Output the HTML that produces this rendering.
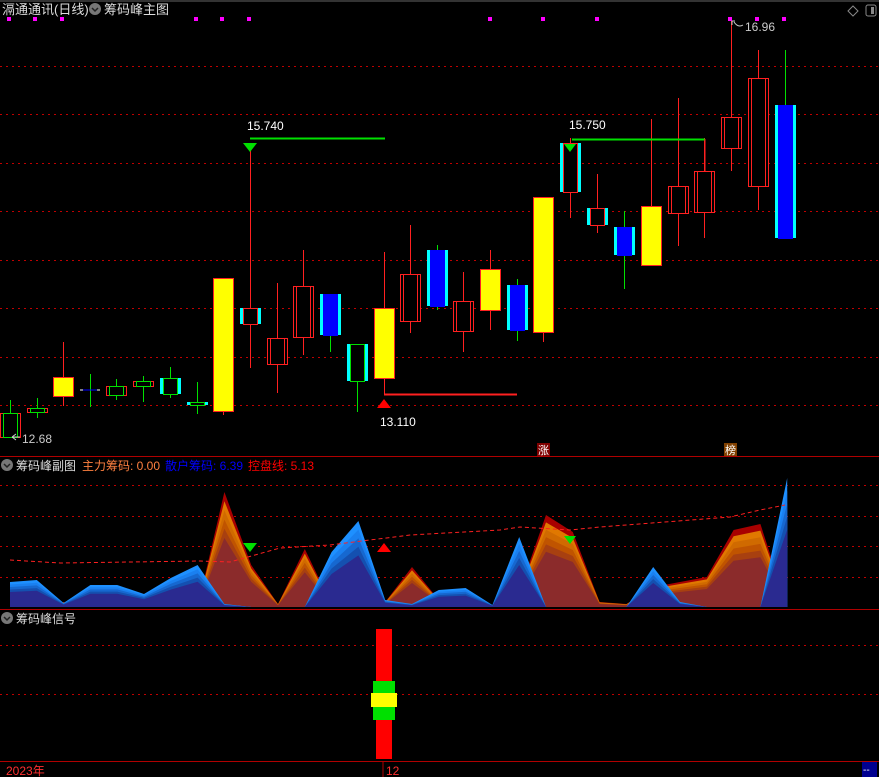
<!DOCTYPE html>
<html><head><meta charset="utf-8"><style>
html,body{margin:0;padding:0;background:#000;width:879px;height:777px;overflow:hidden}
svg{display:block}
text{font-family:"Liberation Sans","Noto Sans CJK SC",sans-serif}
</style></head><body>
<svg id="s" width="879" height="777" xmlns="http://www.w3.org/2000/svg">
<rect width="879" height="777" fill="#000"/>
<line x1="0" y1="1" x2="879" y2="1" stroke="#333" stroke-width="2"/>
<g stroke="#c00000" stroke-dasharray="2,4" stroke-width="1">
<line x1="0" y1="66.5" x2="879" y2="66.5"/><line x1="0" y1="114.5" x2="879" y2="114.5"/>
<line x1="0" y1="163.5" x2="879" y2="163.5"/><line x1="0" y1="211.5" x2="879" y2="211.5"/>
<line x1="0" y1="260.5" x2="879" y2="260.5"/><line x1="0" y1="308.5" x2="879" y2="308.5"/>
<line x1="0" y1="357.5" x2="879" y2="357.5"/><line x1="0" y1="405.5" x2="879" y2="405.5"/>
<line x1="0" y1="485.5" x2="879" y2="485.5"/><line x1="0" y1="516.5" x2="879" y2="516.5"/>
<line x1="0" y1="546.5" x2="879" y2="546.5"/><line x1="0" y1="577.5" x2="879" y2="577.5"/>
<line x1="0" y1="645.5" x2="879" y2="645.5"/><line x1="0" y1="694.5" x2="879" y2="694.5"/>
</g>
<g stroke="#b00000"><line x1="0" y1="456.5" x2="879" y2="456.5"/><line x1="0" y1="609.5" x2="879" y2="609.5"/><line x1="0" y1="761.5" x2="879" y2="761.5"/></g>
<g id="area"></g>
<polyline points="10,560 60,563 200,561 230,562 280,548 330,545 410,535 500,530 520,527 570,530 600,527 730,517 760,510 785,505" fill="none" stroke="#ff2020" stroke-dasharray="4,3" stroke-width="1"/>
<g id="c"></g>
<g fill="#f0f" id="dots"></g>
<!-- annotations -->
<line x1="250" y1="138.5" x2="385" y2="138.5" stroke="#00e000" stroke-width="2"/>
<polygon points="243,143 257,143 250,152" fill="#00e000"/>
<text x="247" y="130" fill="#fff" font-size="12">15.740</text>
<line x1="572" y1="139.5" x2="705" y2="139.5" stroke="#00e000" stroke-width="2"/>
<line x1="705" y1="139" x2="705" y2="171" stroke="#ff2020"/>
<polygon points="564,144 576,144 570,152" fill="#00e000"/>
<text x="569" y="129" fill="#fff" font-size="12">15.750</text>
<line x1="384" y1="394.5" x2="517" y2="394.5" stroke="#ff2020" stroke-width="2"/>
<polygon points="377,408 391,408 384,399" fill="#ff0000"/>
<text x="380" y="426" fill="#fff" font-size="12">13.110</text>
<text x="22" y="443" fill="#ccc" font-size="12">12.68</text>
<path d="M20,437 H12 M12,437 l4,-3 M12,437 l4,3" stroke="#ccc" fill="none"/>
<text x="745" y="31" fill="#ccc" font-size="12">16.96</text>
<path d="M732,21 l3,0 M732,21 v4 M734,22 q4,6 9,3" stroke="#ccc" fill="none"/>
<polygon points="243,543 257,543 250,552" fill="#00e000"/>
<polygon points="564,536 576,536 570,544" fill="#00e000"/>
<polygon points="377,552 391,552 384,543" fill="#ff0000"/>
<rect x="537" y="443" width="13" height="13" fill="#800000"/><text x="538" y="454" fill="#fff" font-size="11">涨</text>
<rect x="724" y="443" width="13" height="13" fill="#804000"/><text x="725" y="454" fill="#fff" font-size="11">榜</text>
<!-- headers -->
<text x="2" y="14" fill="#ddd" font-size="13">滆通通讯(日线)</text>
<circle cx="95" cy="9" r="6" fill="#777"/><path d="M92,8 l3,3 l3,-3" stroke="#222" stroke-width="1.5" fill="none"/>
<text x="104" y="14" fill="#ddd" font-size="13">筹码峰主图</text>
<path d="M848,11 l5,-5 l5,5 l-5,5z" stroke="#888" fill="none"/>
<rect x="866" y="5" width="10" height="11" rx="2" stroke="#888" fill="none"/><rect x="871" y="7" width="3" height="7" fill="#888"/>
<circle cx="7" cy="465" r="6" fill="#777"/><path d="M4,464 l3,3 l3,-3" stroke="#222" stroke-width="1.5" fill="none"/>
<text x="16" y="470" fill="#ddd" font-size="12">筹码峰副图</text>
<text x="82" y="470" fill="#ff8040" font-size="12">主力筹码: 0.00</text>
<text x="165" y="470" fill="#0000ff" font-size="12">散户筹码: 6.39</text>
<text x="248" y="470" fill="#ff0000" font-size="12">控盘线: 5.13</text>
<circle cx="7" cy="618" r="6" fill="#777"/><path d="M4,617 l3,3 l3,-3" stroke="#222" stroke-width="1.5" fill="none"/>
<text x="16" y="623" fill="#ddd" font-size="12">筹码峰信号</text>
<!-- signal -->
<rect x="376" y="629" width="16" height="130" fill="#ff0000"/>
<rect x="373" y="681" width="22" height="39" fill="#00e000"/>
<rect x="371" y="693" width="26" height="14" fill="#ffff00"/>
<!-- bottom -->
<text x="6" y="775" fill="#ff3030" font-size="12">2023年</text>
<line x1="383" y1="762" x2="383" y2="777" stroke="#b00000"/>
<text x="386" y="775" fill="#ff3030" font-size="12">12</text>
<rect x="862" y="762" width="15" height="15" fill="#000090"/><text x="863" y="773" fill="#fff" font-size="10">--</text>
</svg>
<script>
var NS="http://www.w3.org/2000/svg";
function el(p,t,a){var e=document.createElementNS(NS,t);for(var k in a)e.setAttribute(k,a[k]);p.appendChild(e);return e;}
var c=document.getElementById('c');
// x, hi, lo, top, bot, type
var C=[[10,400,437,413,437,'gh'],[37,398,418,408,412,'gh'],[63,342,406,377,396,'y'],[90,374,407,389,391,'x'],[116,379,400,386,395,'gh'],[143,376,402,381,386,'gh'],[170,367,398,378,394,'gc'],[197,382,414,402,405,'gc'],
[223,278,415,278,411,'y'],[250,146,368,308,324,'rc'],[277,283,393,338,364,'r'],[303,250,355,286,337,'r'],[330,294,352,294,335,'b'],[357,344,412,344,381,'gc'],[384,252,395,308,378,'y'],[410,225,333,274,321,'r'],[437,245,310,250,306,'b'],[463,272,352,301,331,'r'],[490,250,330,269,310,'y'],[517,279,341,285,330,'b'],
[543,197,342,197,332,'y'],[570,138,218,143,192,'rc'],[597,174,233,208,225,'rc'],[624,211,289,227,255,'b'],[651,119,265,206,265,'y'],[678,98,246,186,213,'r'],[704,138,238,171,212,'r'],[731,20,171,117,148,'r'],[758,50,210,78,186,'r'],[785,50,238,105,238,'b']];
C.forEach(function(d){var x=d[0],t=d[5],w=20,l=x-10;
 var wc=(t=='b'||t=='gh'||t=='gc'||t=='x')?'#00e000':'#ff2020';
 el(c,'line',{x1:x+.5,y1:d[1],x2:x+.5,y2:d[2],stroke:wc});
 var h=Math.max(d[4]-d[3],2);
 if(t=='y'){el(c,'rect',{x:l+.5,y:d[3]+.5,width:w,height:h,fill:'#ffff00',stroke:'#ff2020'});}
 else if(t=='b'){el(c,'rect',{x:l,y:d[3],width:w+1,height:h,fill:'#00ffff'});el(c,'rect',{x:l+3,y:d[3],width:w-5,height:h+1,fill:'#0000ff'});}
 else if(t=='r'){el(c,'rect',{x:l+.5,y:d[3]+.5,width:w,height:h,fill:'#000',stroke:'#ff2020'});el(c,'line',{x1:l+3.5,y1:d[3],x2:l+3.5,y2:d[4],stroke:'#ff2020'});el(c,'line',{x1:l+w-2.5,y1:d[3],x2:l+w-2.5,y2:d[4],stroke:'#ff2020'});}
 else if(t=='rc'){el(c,'rect',{x:l,y:d[3],width:w+1,height:h,fill:'#00ffff'});el(c,'rect',{x:l+3.5,y:d[3]+.5,width:w-6,height:h,fill:'#000',stroke:'#ff2020'});}
 else if(t=='gc'){el(c,'rect',{x:l,y:d[3],width:w+1,height:h,fill:'#00ffff'});el(c,'rect',{x:l+3.5,y:d[3]+.5,width:w-6,height:h,fill:'#000',stroke:'#00e000'});}
 else if(t=='gh'){el(c,'rect',{x:l+.5,y:d[3]+.5,width:w,height:h,fill:'#000',stroke:'#ff2020'});el(c,'rect',{x:l+3.5,y:d[3]+.5,width:w-6,height:h,fill:'none',stroke:'#00e000'});}
 else {el(c,'line',{x1:l,y1:390,x2:l+w,y2:390,stroke:'#fff'});el(c,'line',{x1:l+3,y1:390,x2:l+w-3,y2:390,stroke:'#0000ff'});}
});
var dots=document.getElementById('dots');
[9,35,62,196,222,249,490,543,597,730,757,784].forEach(function(x){el(dots,'rect',{x:x-2,y:17,width:4,height:4});});
var a=document.getElementById('area'),B0=607;
var B=[25,27,4,22,22,13,29,42,3,0,0,0,55,86,7,3,17,19,2,70,0,0,0,0,40,5,0,0,0,129];
var R=[0,0,5,0,0,0,0,0,115,42,3,58,2,0,5,40,7,0,0,15,92,75,5,3,20,25,30,77,83,0];
function X(i){return 10+26.8*i;}
function poly(H,f,col){var p=X(0)+','+B0;for(var i=0;i<H.length;i++)p+=' '+X(i).toFixed(1)+','+(B0-H[i]*f).toFixed(1);p+=' '+X(H.length-1)+','+B0;el(a,'polygon',{points:p,fill:col});}
[[1,'#a80000'],[0.92,'#e07800'],[0.84,'#d06a00'],[0.76,'#c05400'],[0.68,'#a84010'],[0.6,'#8b2b2b']].forEach(function(q){poly(R,q[0],q[1]);});
[[1,'#1e90ff'],[0.9,'#1a80f0'],[0.8,'#1668d0'],[0.7,'#1450b0'],[0.6,'#2a2a90']].forEach(function(q){poly(B,q[0],q[1]);});
</script>
</body></html>
